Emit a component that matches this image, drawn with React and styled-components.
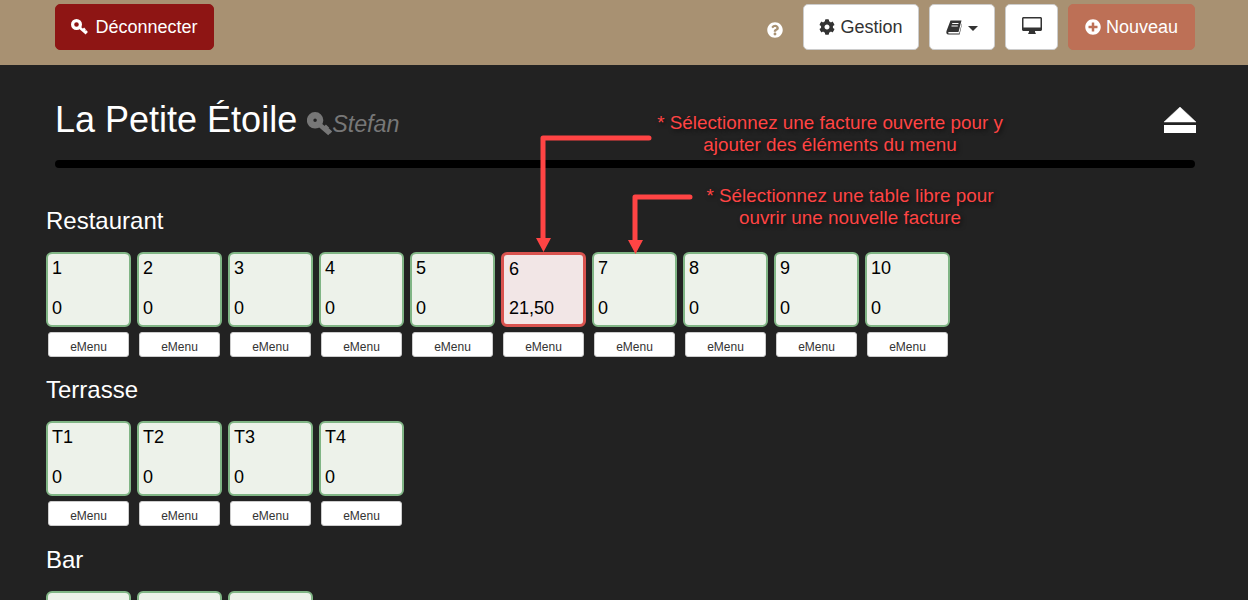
import React from 'react';
import styled, { createGlobalStyle } from 'styled-components';
import { FaCog, FaPlusCircle, FaQuestionCircle } from 'react-icons/fa';

const GlobalStyle = createGlobalStyle`
  html, body {
    margin: 0;
    height: 600px;
    overflow: hidden;
    background: #222222;
    font-family: "Liberation Sans", Arial, sans-serif;
  }
`;

const Page = styled.div`
  position: relative;
  width: 1248px;
  height: 600px;
  overflow: hidden;
  background: #222222;
`;

const TopBar = styled.header`
  height: 65px;
  box-sizing: border-box;
  padding: 4px 53px 0 55px;
  background: #a89172;
  display: flex;
  align-items: flex-start;
`;

const Button = styled.button`
  height: 46px;
  box-sizing: border-box;
  padding: 0;
  border-radius: 5px;
  border: 1px solid ${(p) => p.$border || '#cccccc'};
  background: ${(p) => p.$bg || '#ffffff'};
  color: ${(p) => p.$color || '#333333'};
  font-family: inherit;
  font-size: 18px;
  display: flex;
  align-items: center;
  justify-content: center;
  gap: ${(p) => p.$gap || 5}px;
  width: ${(p) => p.$width}px;
  margin-left: ${(p) => p.$left || 0}px;
  svg { flex: none; }
`;

const Spacer = styled.div`
  flex: 1;
`;

const Help = styled(FaQuestionCircle)`
  color: #ffffff;
  font-size: 16px;
  margin: 18px 20px 0 0;
`;

const Caret = styled.span`
  width: 0;
  height: 0;
  border-left: 5px solid transparent;
  border-right: 5px solid transparent;
  border-top: 5px solid #333333;
  margin-top: 2px;
`;

const DesktopIcon = styled.svg`
  margin-top: -3px;
`;

const Content = styled.main`
  padding: 0 52px 0 46px;
`;

const TitleRow = styled.div`
  display: flex;
  align-items: center;
  justify-content: space-between;
  height: 95px;
  box-sizing: border-box;
  padding: 15px 0 0 9px;
`;

const Title = styled.h1`
  margin: 0;
  font-size: 36px;
  font-weight: 400;
  color: #ffffff;
  line-height: 40px;
  display: flex;
  align-items: flex-end;
`;

const User = styled.span`
  display: flex;
  align-items: center;
  margin-left: 10px;
  margin-bottom: 3px;
  font-size: 23.3px;
  font-style: italic;
  color: #777777;
  line-height: 26px;
`;

const Rule = styled.div`
  height: 8px;
  margin: 0 1px 0 9px;
  border-radius: 4px;
  background: #000000;
`;

const Section = styled.section`
  margin-top: ${(p) => p.$top}px;
`;

const SectionName = styled.h2`
  margin: 0 0 18px;
  font-size: 24px;
  font-weight: 400;
  line-height: 26px;
  color: #ffffff;
`;

const Grid = styled.div`
  display: flex;
  gap: 6px;
`;

const Slot = styled.div`
  width: 85px;
  display: flex;
  flex-direction: column;
  gap: 5px;
`;

const Card = styled.div`
  width: 85px;
  height: 75px;
  box-sizing: border-box;
  padding: ${(p) => (p.$open ? '3.5px 4px 6.5px 5px' : '4px 4px 7px 4px')};
  border-radius: 6px;
  border: ${(p) => (p.$open ? '3px solid #d9534f' : '2.5px solid #80b585')};
  background: ${(p) => (p.$open ? '#f2e6e6' : '#edf2ea')};
  color: #000000;
  font-size: 18px;
  line-height: 20px;
  display: flex;
  flex-direction: column;
  justify-content: space-between;
`;

const MenuButton = styled.button`
  width: 81px;
  height: 25px;
  margin-left: 2px;
  box-sizing: border-box;
  padding: 5px 0 0;
  border-radius: 3px;
  border: 1px solid #cccccc;
  background: #ffffff;
  color: #333333;
  font-family: inherit;
  font-size: 12px;
`;

const Note = styled.p`
  position: absolute;
  top: ${(p) => p.$top}px;
  left: ${(p) => p.$left}px;
  width: ${(p) => p.$width}px;
  margin: 0;
  text-align: center;
  font-size: 18.85px;
  line-height: 22px;
  color: #ff4444;
  text-shadow: 2px 2px 4px rgba(0, 0, 0, 0.6);
`;

const Arrows = styled.svg`
  position: absolute;
  top: 0;
  left: 0;
  pointer-events: none;
`;

const KeyIcon = ({ width, height, ring = 3.2, radius = 3.9, shaft = 2.6 }) => (
  <svg width={width} height={height} viewBox="0 0 17 16" fill="none" stroke="currentColor">
    <circle cx="5.500" cy="5.500" r={radius} strokeWidth={ring} />
    <path d="M8 8L15.500 14.500M12 11.500L14 9.500M14.500 13.500L16 12" strokeWidth={shaft} />
  </svg>
);

const BookIcon = () => (
  <svg width="16" height="15" viewBox="0 0 16 15">
    <path
      d="M4.500 0.500H15.500L12.500 12H3.200C1.800 12 1.800 13.400 3 13.400H13.200L15.800 3.500L16 4L13.600 14.500H2.500C0.500 14.500 0 13 0.500 11Z"
      fill="#333333"
    />
    <path d="M6.200 3.500H12.500M5.500 6H11.800" stroke="#ffffff" strokeWidth="1" />
  </svg>
);

const MonitorIcon = () => (
  <DesktopIcon width="20" height="17" viewBox="0 0 20 17">
    <path
      fillRule="evenodd"
      d="M1.500 0H18.500C19.300 0 20 0.700 20 1.500V12.500C20 13.300 19.300 14 18.500 14H13V15L14 17H6L7 15V14H1.500C0.700 14 0 13.300 0 12.500V1.500C0 0.700 0.700 0 1.500 0ZM1.500 1.500V10.500H18.500V1.500Z"
      fill="#333333"
    />
  </DesktopIcon>
);

const EjectIcon = () => (
  <svg width="32" height="26" viewBox="0 0 32 26">
    <path d="M16 0L32 15H0Z" fill="#ffffff" stroke="#ffffff" strokeWidth="0.500" strokeLinejoin="round" />
    <rect x="0" y="18" width="32" height="8" fill="#ffffff" />
  </svg>
);

const tables = [
  { name: '1', total: '0' },
  { name: '2', total: '0' },
  { name: '3', total: '0' },
  { name: '4', total: '0' },
  { name: '5', total: '0' },
  { name: '6', total: '21,50', open: true },
  { name: '7', total: '0' },
  { name: '8', total: '0' },
  { name: '9', total: '0' },
  { name: '10', total: '0' },
];

const terrace = ['T1', 'T2', 'T3', 'T4'].map((name) => ({ name, total: '0' }));
const bar = ['B1', 'B2', 'B3'].map((name) => ({ name, total: '0' }));

const Room = ({ name, items, top }) => (
  <Section $top={top}>
    <SectionName>{name}</SectionName>
    <Grid>
      {items.map((t) => (
        <Slot key={t.name}>
          <Card $open={t.open}>
            <span>{t.name}</span>
            <span>{t.total}</span>
          </Card>
          <MenuButton>eMenu</MenuButton>
        </Slot>
      ))}
    </Grid>
  </Section>
);

export default function App() {
  return (
    <Page>
      <GlobalStyle />
      <TopBar>
        <Button $bg="#8e1514" $border="#8e1514" $color="#ffffff" $width={159} $gap={7}>
          <KeyIcon width={17} height={16} />
          Déconnecter
        </Button>
        <Spacer />
        <Help />
        <Button $width={116}>
          <FaCog size={16} />
          Gestion
        </Button>
        <Button $width={66} $left={10} $gap={6}>
          <BookIcon />
          <Caret />
        </Button>
        <Button $width={53} $left={10}>
          <MonitorIcon />
        </Button>
        <Button $bg="#bd7056" $border="#bd7056" $color="#ffffff" $width={127} $left={10}>
          <FaPlusCircle size={16} />
          Nouveau
        </Button>
      </TopBar>
      <Content>
        <TitleRow>
          <Title>
            La Petite Étoile
            <User>
              <KeyIcon width={25} height={24} ring={4.4} radius={3.4} shaft={3.2} />
              Stefan
            </User>
          </Title>
          <EjectIcon />
        </TitleRow>
        <Rule />
        <Room name="Restaurant" items={tables} top={40} />
        <Room name="Terrasse" items={terrace} top={20} />
        <Room name="Bar" items={bar} top={21} />
      </Content>
      <Arrows width="1248" height="600" viewBox="0 0 1248 600">
        <path d="M649 138H543V240M690 197H635V242" fill="none" stroke="#ff4444" strokeWidth="5" strokeLinecap="round" strokeLinejoin="round" />
        <path d="M536 238h15l-7.500 14zM628 240h15l-7.500 14z" fill="#ff4444" />
      </Arrows>
      <Note $top={112} $left={650} $width={360}>
        * Sélectionnez une facture ouverte pour y ajouter des éléments du menu
      </Note>
      <Note $top={185} $left={700} $width={300}>
        * Sélectionnez une table libre pour ouvrir une nouvelle facture
      </Note>
    </Page>
  );
}
